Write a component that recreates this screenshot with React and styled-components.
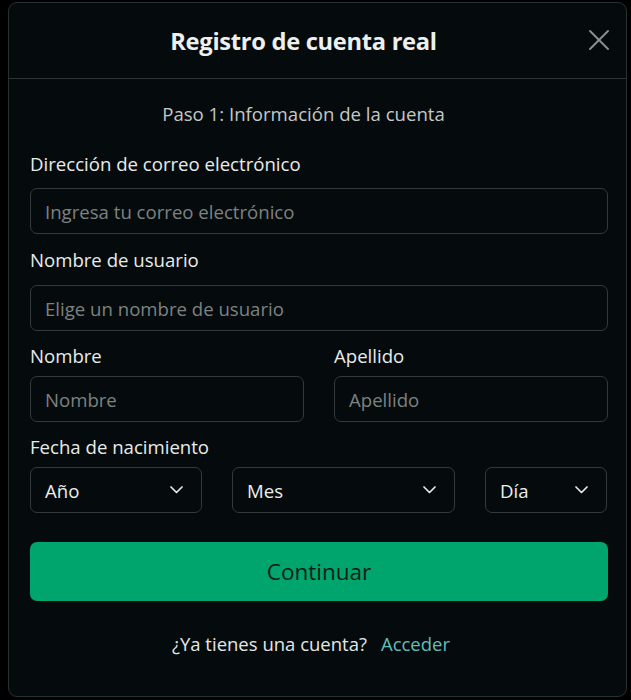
import React from "react";
import styled, { createGlobalStyle } from "styled-components";

const GlobalStyle = createGlobalStyle`
  html, body {
    margin: 0;
    padding: 0;
    background: #000000;
  }
  body {
    font-family: "Open Sans", "Noto Sans", sans-serif;
  }
  * {
    box-sizing: border-box;
  }
`;

// page behind the modal
const Backdrop = styled.div`
  width: 631px;
  height: 700px;
  padding: 2px 4px 3px 8px;
  background: #000000;
`;

const Modal = styled.div`
  width: 619px;
  height: 695px;
  background: #050b0c;
  border: 1px solid #283131;
  border-radius: 9px;
  display: flex;
  flex-direction: column;
  color: #e6e8e8;
`;

const Header = styled.div`
  position: relative;
  height: 76px;
  flex: none;
  display: flex;
  align-items: center;
  border-bottom: 1px solid #2c3535;
`;

const Title = styled.h2`
  flex: 1;
  margin: 0;
  padding-right: 28px;
  text-align: center;
  font-size: 23.7px;
  font-weight: 700;
  color: #eef0f0;
  letter-spacing: -0.3px;
`;

const CloseBtn = styled.button`
  position: absolute;
  right: 17px;
  top: 27px;
  width: 20px;
  height: 20px;
  padding: 0;
  border: none;
  background: none;
  color: #8b8f8f;
  cursor: pointer;
  display: flex;
`;

const Body = styled.div`
  padding: 22px 18px 0 21px;
  display: flex;
  flex-direction: column;
`;

const Step = styled.p`
  margin: 0 0 24px;
  padding-right: 31px;
  text-align: center;
  font-size: 18.6px;
  line-height: 26px;
  color: #c4c8c8;
`;

const Field = styled.div`
  display: flex;
  flex-direction: column;
  gap: ${({ gap }) => gap ?? 7}px;
  flex: ${({ grow }) => grow || "none"};
  margin-bottom: ${({ mb }) => mb ?? 12}px;
`;

const Label = styled.label`
  font-size: 18.6px;
  line-height: 26px;
  color: #e9ebeb;
`;

const Input = styled.input`
  height: 46px;
  width: 100%;
  padding: 0 14px;
  background: #050b0c;
  border: 1px solid #323b3b;
  border-radius: 7px;
  font-family: inherit;
  font-size: 18.6px;
  color: #e9ebeb;
  outline: none;
  &::placeholder {
    color: #7c8282;
  }
`;

const Row = styled.div`
  display: flex;
  gap: 30px;
`;

const Select = styled.div`
  height: 46px;
  width: ${({ w }) => w}px;
  padding: 0 18px 0 14px;
  border: 1px solid #323b3b;
  border-radius: 7px;
  display: flex;
  align-items: center;
  justify-content: space-between;
  font-size: 18.6px;
  color: #eceeee;
`;

const Chevron = () => (
  <svg width="13" height="8" viewBox="0 0 13 8" fill="none" stroke="#e6e8e8" strokeWidth="1.7" strokeLinecap="round" strokeLinejoin="round">
    <polyline points="1 1 6.5 6.5 12 1" />
  </svg>
);

const Submit = styled.button`
  margin-top: 17px;
  height: 59px;
  width: 100%;
  flex: none;
  border: none;
  border-radius: 7px;
  background: #00a46d;
  color: #0b1c15;
  font-family: inherit;
  font-size: 22.5px;
  cursor: pointer;
`;

const Footer = styled.p`
  margin: 30px 0 0;
  padding-right: 16px;
  text-align: center;
  font-size: 18.5px;
  line-height: 26px;
  color: #e3e6e6;
`;

const LinkText = styled.a`
  margin-left: 14px;
  color: #62bcbc;
  text-decoration: none;
  cursor: pointer;
`;

export default function App() {
  return (
    <>
      <GlobalStyle />
      <Backdrop>
        <Modal>
          <Header>
            <Title>Registro de cuenta real</Title>
            <CloseBtn aria-label="Cerrar">
              <svg width="20" height="20" viewBox="0 0 20 20" fill="none" stroke="currentColor" strokeWidth="1.9" strokeLinecap="round">
                <line x1="1" y1="1" x2="19" y2="19" />
                <line x1="19" y1="1" x2="1" y2="19" />
              </svg>
            </CloseBtn>
          </Header>
          <Body>
            <Step>Paso 1: Información de la cuenta</Step>
            <Field gap={11} mb={13}>
              <Label>Dirección de correo electrónico</Label>
              <Input placeholder="Ingresa tu correo electrónico" />
            </Field>
            <Field gap={12}>
              <Label>Nombre de usuario</Label>
              <Input placeholder="Elige un nombre de usuario" />
            </Field>
            <Row>
              <Field grow={1}>
                <Label>Nombre</Label>
                <Input placeholder="Nombre" />
              </Field>
              <Field grow={1}>
                <Label>Apellido</Label>
                <Input placeholder="Apellido" />
              </Field>
            </Row>
            <Field>
              <Label>Fecha de nacimiento</Label>
              <Row>
                <Select w={172}>Año<Chevron /></Select>
                <Select w={223}>Mes<Chevron /></Select>
                <Select w={122}>Día<Chevron /></Select>
              </Row>
            </Field>
            <Submit>Continuar</Submit>
            <Footer>
              ¿Ya tienes una cuenta?<LinkText>Acceder</LinkText>
            </Footer>
          </Body>
        </Modal>
      </Backdrop>
    </>
  );
}
